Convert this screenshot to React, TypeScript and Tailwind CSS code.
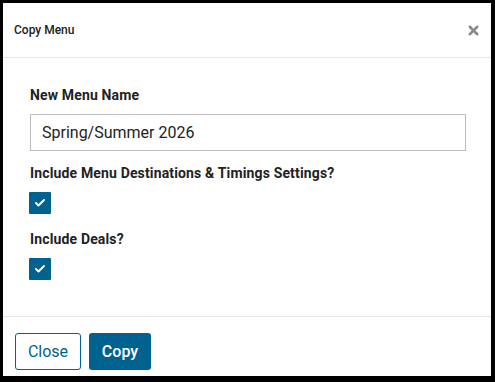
import { Check, X } from "lucide-react";

function CheckBox() {
  return (
    <div className="flex items-center justify-center w-[22px] h-[22px] bg-[#00628f] rounded-[1px]">
      <Check size={12} strokeWidth={4} className="text-white" />
    </div>
  );
}

export default function App() {
  return (
    <div className="w-[495px] h-[382px] bg-black pl-[3px] pt-[3px] pr-[4px] pb-[6px] font-['Roboto','Liberation_Sans',sans-serif]">
      <div className="flex flex-col h-full bg-white">
        <header className="flex items-center justify-between h-[55px] pl-[11px] pr-[10px] border-b border-[#e6e6e6]">
          <div className="text-[12px] font-medium text-[#222]">Copy Menu</div>
          <X size={15} strokeWidth={4} className="text-[#888]" />
        </header>

        <div className="flex-1 pl-[27px] pr-[25px] pt-[27px]">
          <div className="text-[14px] leading-[20px] font-bold tracking-[0.15px] text-[#222]">New Menu Name</div>
          <div className="mt-[9px] h-[37px] border border-[#bdbdbd] flex items-center px-[11px] text-[16px] text-[#222]">
            Spring/Summer 2026
          </div>

          <div className="mt-[12px] text-[14px] leading-[20px] font-bold tracking-[0.15px] text-[#222]">
            Include Menu Destinations &amp; Timings Settings?
          </div>
          <div className="mt-[9px] -ml-[1px]">
            <CheckBox />
          </div>

          <div className="mt-[15px] text-[14px] leading-[20px] font-bold tracking-[0.15px] text-[#222]">
            Include Deals?
          </div>
          <div className="mt-[9px] -ml-[1px]">
            <CheckBox />
          </div>
        </div>

        <footer className="flex gap-[8px] h-[60px] pl-[12px] pt-[16px] border-t border-[#e6e6e6]">
          <button className="h-[37px] w-[66px] rounded-[3px] border border-[#00628f] text-[#00628f] text-[16px] bg-white">
            Close
          </button>
          <button className="h-[37px] w-[62px] rounded-[3px] bg-[#00628f] text-white text-[16px] font-medium">
            Copy
          </button>
        </footer>
      </div>
    </div>
  );
}
